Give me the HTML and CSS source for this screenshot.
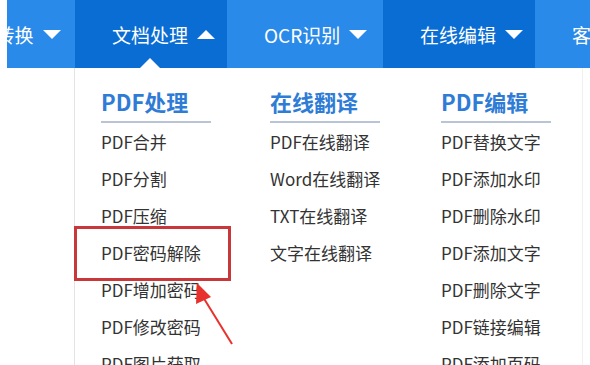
FILE: index.html
```html
<!DOCTYPE html>
<html>

	<head>
		<meta charset="UTF-8">
		<title>文档处理菜单</title>
		<link rel="stylesheet" href="styles.css">
	</head>

	<body>
		<div class="page">
			<ul class="nav">
				<li class="first"><span>PDF转换</span><i class="down"></i></li>
				<li class="on"><span>文档处理</span><i class="up"></i><b class="tip"></b></li>
				<li><span>OCR识别</span><i class="down"></i></li>
				<li class="dark"><span>在线编辑</span><i class="down"></i></li>
				<li><span>客户端</span></li>
			</ul>

			<div class="menu">
				<div class="col">
					<h3>PDF处理</h3>
					<ul>
						<li>PDF合并</li>
						<li>PDF分割</li>
						<li>PDF压缩</li>
						<li>PDF密码解除</li>
						<li>PDF增加密码</li>
						<li>PDF修改密码</li>
						<li>PDF图片获取</li>
					</ul>
				</div>
				<div class="col">
					<h3>在线翻译</h3>
					<ul>
						<li>PDF在线翻译</li>
						<li>Word在线翻译</li>
						<li>TXT在线翻译</li>
						<li>文字在线翻译</li>
					</ul>
				</div>
				<div class="col">
					<h3>PDF编辑</h3>
					<ul>
						<li>PDF替换文字</li>
						<li>PDF添加水印</li>
						<li>PDF删除水印</li>
						<li>PDF添加文字</li>
						<li>PDF删除文字</li>
						<li>PDF链接编辑</li>
						<li>PDF添加页码</li>
					</ul>
				</div>
			</div>

			<!-- 标注 -->
			<div class="mark"></div>
			<svg class="arrow" width="60" height="80" viewBox="0 0 60 80">
				<line x1="56" y1="67" x2="27" y2="20" stroke="#e8312c" stroke-width="2"/>
				<polygon points="21,6 20,27 35,20" fill="#e8312c"/>
			</svg>
		</div>
	</body>

</html>
```

FILE: styles.css
```css
* {margin: 0;padding: 0;}
li { list-style:none; }
body { font-family: "Noto Sans CJK SC", "Microsoft YaHei", sans-serif; background:#fff; }

.page { width:590px; height:365px; overflow:hidden; position:relative; padding-left:7px; box-sizing:border-box; }

.nav { display:flex; height:68px; background:#2a8aea; }
.nav li { flex:none; width:152px; padding-left:37px; box-sizing:border-box; display:flex; align-items:center; color:#fff; font-size:19px; position:relative; }
.nav li.first { margin-left:-84px; }
.nav li.on, .nav li.dark { background:#0a6dd4; }
.nav li:nth-child(3) { width:156px; }
.nav i { display:block; width:0; height:0; margin-left:9px; border-left:9px solid transparent; border-right:9px solid transparent; }
.nav i.down { border-top:9px solid #fff; }
.nav i.up { border-bottom:9px solid #fff; }
.nav .tip { position:absolute; left:65px; bottom:0; width:0; height:0; border-left:10px solid transparent; border-right:10px solid transparent; border-bottom:10px solid #fff; }

.menu { margin-left:67px; width:509px; height:297px; border-left:1px solid #e3e3e3; border-right:1px solid #f1f1f1; display:grid; grid-template-columns:169px 171px 1fr; padding-left:26px; box-sizing:border-box; }
.col h3 { width:110px; font-size:22px; line-height:30px; padding-top:18px; padding-bottom:5px; color:#2f7cd6; font-weight:bold; border-bottom:2px solid #b9c5d6; }
.col li { line-height:37px; font-size:17px; color:#333; white-space:nowrap; }

.mark { position:absolute; left:74px; top:226px; width:157px; height:55px; border:3px solid #c8383a; box-sizing:border-box; }
.arrow { position:absolute; left:176px; top:277px; }
```
